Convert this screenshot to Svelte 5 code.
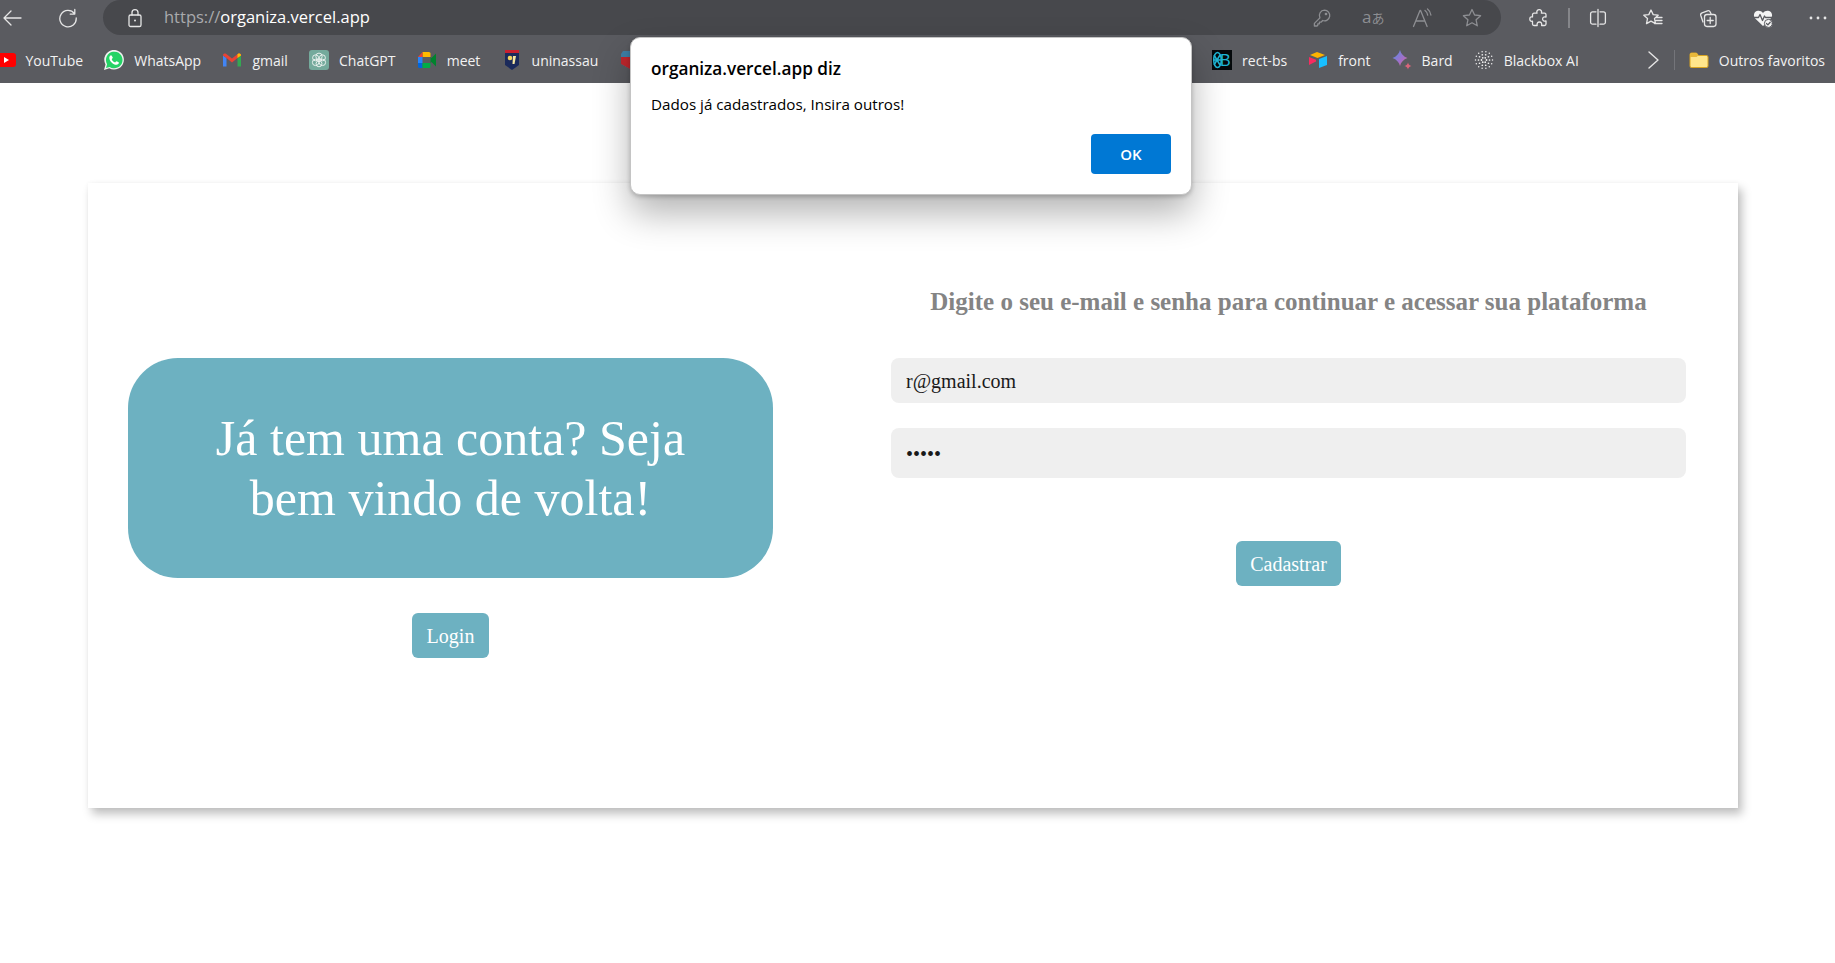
<script>
  // dots of the Blackbox favicon, rings around the centre
  const blackboxDots = [];
  for (const [radius, count, size] of [[2.5, 6, 0.9], [5.5, 10, 0.85], [8.5, 14, 0.75]]) {
    for (let i = 0; i < count; i++) {
      const angle = (i / count) * Math.PI * 2;
      blackboxDots.push({
        x: 10 + radius * Math.cos(angle),
        y: 10 + radius * Math.sin(angle),
        r: size
      });
    }
  }
</script>

<div class="page">
  <header class="browser">
    <div class="toolbar">
      <svg class="icon back" viewBox="0 0 20 20"><path d="M19 10H2M9 3 2 10l7 7" /></svg>
      <svg class="icon refresh" viewBox="0 0 20 20"><path d="M16.5 5.6A8.2 8.2 0 1 0 18.2 10M16.8 1.5v4.6h-4.6" /></svg>

      <div class="address">
        <svg class="icon" viewBox="0 0 20 20">
          <rect x="4" y="7" width="12" height="11.5" rx="1.6" />
          <path d="M7 7V4.6a3 3 0 0 1 6 0V7" />
          <circle class="solid" cx="10" cy="12.5" r="1" />
        </svg>
        <span class="url"><span class="scheme">https://</span>organiza.vercel.app</span>
        <div class="address-actions">
          <svg class="icon dim" viewBox="0 0 20 20">
            <path d="M12.5 2.2a5.3 5.3 0 1 1-1.8 10.3L9 14.2H7.4v1.6H5.8v1.4l-.8.8H2.4v-2.6l5.5-5.5a5.3 5.3 0 0 1 4.6-7.7z" />
            <circle cx="14" cy="6" r="0.7" />
          </svg>
          <span class="translate">a<span class="jp">あ</span></span>
          <svg class="icon dim" viewBox="0 0 20 20">
            <path d="M1.5 18.5 8 2.5h.6l6.5 16M3.8 13h9M13 2.5c1.6 1.2 2.5 2.8 2.7 4.6M15.5 1c2 1.6 3.2 3.6 3.4 6" />
          </svg>
          <svg class="icon dim" viewBox="0 0 20 20">
            <path d="M10 1.5l2.6 5.5 6 .7-4.500 4.100 1.200 6-5.300-3-5.300 3 1.200-6L1.400 7.700l6-.7z" />
          </svg>
        </div>
      </div>

      <div class="tools">
        <svg class="icon" viewBox="0 0 20 20">
          <path d="M8 5.200C7.200 2.800 8.800 1.600 10.200 1.600S13.200 2.800 12.400 5.200H15.500a1.500 1.500 0 0 1 1.500 1.500V9C14.800 8.400 13.600 9.600 13.600 11S14.800 13.600 17 13V16a1.500 1.500 0 0 1-1.500 1.500H12.600C13.200 15.300 12 14 10.400 14S7.600 15.300 8.200 17.500H5a1.500 1.500 0 0 1-1.500-1.500V13.200C1.400 13.800.8 12.200.8 11S1.400 8.400 3.500 9V6.700A1.500 1.500 0 0 1 5 5.200Z" />
        </svg>
        <span class="tool-sep"></span>
        <svg class="icon" viewBox="0 0 20 20">
          <path d="M8 3.800H4.600a2 2 0 0 0-2 2v8.400a2 2 0 0 0 2 2H8M12 3.800h3.400a2 2 0 0 1 2 2v8.400a2 2 0 0 1-2 2H12M10 1.500v17" />
        </svg>
        <svg class="icon" viewBox="0 0 20 20">
          <path d="M8 2l2.200 4.600 5 .6-3.700 3.400 1 5-4.500-2.500-4.500 2.500 1-5L.8 7.200l5-.6zM13.500 9.500H19M13 12.500h6M11.500 15.500H19" />
        </svg>
        <svg class="icon" viewBox="0 0 20 20">
          <path d="M5 14 2.800 7.500c-.4-1.300.2-2.300 1.300-2.700l5.400-2c1.200-.4 2.200 0 2.700 1.100l.8 1.800" />
          <rect x="6.500" y="6.500" width="11.500" height="12" rx="2.400" />
          <path d="M12.200 9.500v6M9.200 12.500h6" />
        </svg>
        <svg class="icon" viewBox="0 0 20 20">
          <path class="filled" d="M10 18 2.200 10.400C-.2 8 .8 3.300 4.800 2.700c2.100-.3 3.900.6 5.200 2.200 1.300-1.600 3.100-2.500 5.200-2.200 4 .6 5 5.300 2.600 7.700z" />
          <path class="pulse" d="M.8 9.500h4.700l1.500-3 2.500 6 2-4.500 1 1.500h6.500" />
          <circle class="badge" cx="15.400" cy="15.400" r="4" />
          <path class="tick" d="M13.500 15.500l1.400 1.400 2.300-2.600" />
        </svg>
        <svg class="icon" viewBox="0 0 20 20">
          <circle class="solid" cx="3" cy="10" r="1.400" />
          <circle class="solid" cx="10" cy="10" r="1.400" />
          <circle class="solid" cx="17" cy="10" r="1.400" />
        </svg>
      </div>
    </div>

    <nav class="bookmarks">
      <div class="bookmark-group left">
        <span class="bookmark">
          <svg class="favicon" viewBox="0 0 20 20">
            <rect y="3" width="20" height="14" rx="3" fill="#f00" />
            <path d="M8 7v6l5-3z" fill="#fff" />
          </svg>
          YouTube
        </span>
        <span class="bookmark">
          <svg class="favicon" viewBox="0 0 20 20">
            <path d="M0 20l1.500-5.500a9.800 9.800 0 1 1 3.800 3.800z" fill="#f2f2f2" />
            <path d="M2 18l1.100-3.800a8.300 8.300 0 1 1 2.600 2.700z" fill="#25d366" />
            <path d="M7 5.200c-.6 0-1.700 1-1.700 2.500 0 3.300 3.800 7.100 7.200 7.100 1.400 0 2.400-1.100 2.400-2 0-.4-2-1.500-2.500-1.500-.4 0-.9 1.100-1.300 1.100-1 0-3.300-2.200-3.300-3.200 0-.4 1-.9 1-1.400S7.500 5.200 7 5.200z" fill="#fff" />
          </svg>
          WhatsApp
        </span>
        <span class="bookmark">
          <svg class="favicon" viewBox="0 0 20 20">
            <path d="M1 5.500 1 16.500h3.500V8z" fill="#4285f4" />
            <path d="M19 5.500v11h-3.500V8z" fill="#34a853" />
            <path d="M1 5.500c0-2 2-2.500 3.300-1.500L10 8.500 15.700 4c1.300-1 3.300-.5 3.300 1.500L15.500 8 10 12.400 4.500 8z" fill="#ea4335" />
            <path d="M15.700 4c1.300-1 3.300-.5 3.300 1.500L15.500 8V4.200z" fill="#fbbc04" />
          </svg>
          gmail
        </span>
        <span class="bookmark">
          <svg class="favicon" viewBox="0 0 20 20">
            <rect width="20" height="20" rx="3" fill="#74aa9c" />
            <g fill="none" stroke="#e8f1ee" stroke-width="1">
              <circle cx="10" cy="6.300" r="3.200" />
              <circle cx="6.600" cy="12.400" r="3.200" />
              <circle cx="13.400" cy="12.400" r="3.200" />
              <circle cx="6.600" cy="7.800" r="3" />
              <circle cx="13.400" cy="7.800" r="3" />
              <circle cx="10" cy="13.800" r="3" />
            </g>
          </svg>
          ChatGPT
        </span>
        <span class="bookmark">
          <svg class="favicon" viewBox="0 0 20 20">
            <path d="M1 7h4.500v6H1z" fill="#2684fc" />
            <path d="M5.500 2H12a1.500 1.500 0 0 1 1.500 1.500V7h-8z" fill="#ffba00" />
            <path d="M5.500 2v5H1z" fill="#ea4335" />
            <path d="M1 13h4.500v5H2.500A1.500 1.500 0 0 1 1 16.500z" fill="#0066da" />
            <path d="M5.500 13h8v3.500A1.500 1.500 0 0 1 12 18H5.500z" fill="#00ac47" />
            <path d="M13.500 7v6l1-1 4.500 4.500v-13L14.500 8z" fill="#00832d" />
          </svg>
          meet
        </span>
        <span class="bookmark">
          <svg class="favicon" viewBox="0 0 20 20">
            <path d="M3 0h14v15l-7 5-7-5z" fill="#1b2a5b" />
            <path d="M3 0h14v3H3z" fill="#c8202f" />
            <circle cx="8" cy="8" r="2.300" fill="#f4d35e" />
            <path d="M11 6h3l-1.500 8h-2z" fill="#f7e7a1" />
          </svg>
          uninassau
        </span>
        <span class="bookmark">
          <svg class="favicon" viewBox="0 0 20 20">
            <path d="M3 1h14l2 3v10l-9 5-9-5V4z" fill="#3d7fa6" />
            <path d="M1 7h18v7l-9 5-9-5z" fill="#c0272d" />
          </svg>
        </span>
      </div>

      <div class="bookmark-group right">
        <span class="bookmark">
          <svg class="favicon" viewBox="0 0 20 20">
            <rect width="20" height="20" fill="#05090c" />
            <g fill="none" stroke="#1fb6d5" stroke-width="1.500">
              <ellipse cx="5.500" cy="10" rx="3.800" ry="7.500" />
              <path d="M1 10h8M2 5l6 10M2 15l6-10" />
            </g>
            <text x="8" y="16" class="rect-b">B</text>
          </svg>
          rect-bs
        </span>
        <span class="bookmark">
          <svg class="favicon" viewBox="0 0 20 20">
            <path d="M9 2 2 5l7.500 3L17 5z" fill="#fcb400" />
            <path d="M11 9v9l8-3V6z" fill="#18bfff" />
            <path d="M1 7v8l7-3.500V9.800z" fill="#f82b60" />
          </svg>
          front
        </span>
        <span class="bookmark">
          <svg class="favicon" viewBox="0 0 20 20">
            <defs>
              <linearGradient id="bard-grad" x1="0" y1="0" x2="1" y2="1">
                <stop offset="0" stop-color="#4f8fe8" />
                <stop offset="0.6" stop-color="#a36fc8" />
                <stop offset="1" stop-color="#e0707a" />
              </linearGradient>
            </defs>
            <path d="M8 0c1 3.800 3.400 6.500 7.500 8-4.100 1.500-6.500 4.200-7.500 8-1-3.800-3.400-6.500-7.500-8C4.600 6.500 7 3.800 8 0z" fill="url(#bard-grad)" />
            <path d="M16 12.500c.4 1.800 1.500 3 3.500 3.500-2 .5-3.100 1.700-3.500 3.500-.4-1.800-1.500-3-3.500-3.500 2-.5 3.100-1.700 3.500-3.500z" fill="#d9657a" />
          </svg>
          Bard
        </span>
        <span class="bookmark">
          <svg class="favicon" viewBox="0 0 20 20">
            {#each blackboxDots as dot}
              <circle cx={dot.x} cy={dot.y} r={dot.r} fill="#eee" />
            {/each}
          </svg>
          Blackbox AI
        </span>
        <svg class="icon chevron" viewBox="0 0 14 20"><path d="M3 2l9 8-9 8" /></svg>
        <span class="bar-sep"></span>
        <span class="bookmark">
          <svg class="favicon" viewBox="0 0 20 20">
            <path d="M1 4.500A1.500 1.500 0 0 1 2.500 3h5l2 2.500h8A1.500 1.500 0 0 1 19 7v9a1.500 1.500 0 0 1-1.500 1.500h-15A1.500 1.500 0 0 1 1 16z" fill="#ffe68c" stroke="#d9a520" />
            <path d="M1 4.500A1.500 1.500 0 0 1 2.500 3h5l2 2.500-2 1.500H1z" fill="#e9b93a" />
          </svg>
          Outros favoritos
        </span>
      </div>
    </nav>
  </header>

  <main class="card">
    <section class="welcome">
      <h1 class="banner">Já tem uma conta? Seja bem vindo de volta!</h1>
      <button class="action">Login</button>
    </section>

    <section class="signup">
      <h2>Digite o seu e-mail e senha para continuar e acessar sua plataforma</h2>
      <input class="field" type="email" value="r@gmail.com" />
      <input class="field password" type="password" value="abcde" />
      <button class="action">Cadastrar</button>
    </section>
  </main>

  <div class="dialog">
    <h3>organiza.vercel.app diz</h3>
    <p>Dados já cadastrados, Insira outros!</p>
    <div class="dialog-actions">
      <button class="ok">OK</button>
    </div>
  </div>
</div>

<style>
  :global(body) {
    background: #fff;
    overflow: hidden;
  }

  .page {
    position: relative;
    min-height: 100vh;
    overflow: hidden;
    font-family: "Liberation Serif", "Times New Roman", serif;
  }

  .browser {
    height: 83px;
    background: #5a5b60;
    font-family: "Open Sans", "Noto Sans", sans-serif;
    color: #f2f2f2;
  }

  .icon {
    width: 20px;
    height: 20px;
    flex: none;
    fill: none;
    stroke: #e6e6e6;
    stroke-width: 1.3;
    stroke-linecap: round;
    stroke-linejoin: round;
  }

  .icon .solid {
    fill: #e6e6e6;
    stroke: none;
  }

  .icon.dim {
    stroke: #8d8e92;
  }

  .toolbar {
    height: 35px;
    display: flex;
    align-items: center;
    padding-right: 7px;
  }

  .back {
    margin-left: 2px;
  }

  .refresh {
    margin-left: 36px;
  }

  .address {
    flex: 1;
    height: 35px;
    margin-left: 25px;
    padding: 0 19px 0 22px;
    display: flex;
    align-items: center;
    background: #47484c;
    border-radius: 18px;
  }

  .url {
    margin: -2px 0 0 19px;
    font-size: 16.5px;
    color: #fff;
  }

  .scheme {
    color: #a9aaad;
  }

  .address-actions {
    margin-left: auto;
    display: flex;
    align-items: center;
    gap: 30px;
  }

  .translate {
    width: 20px;
    font-size: 17px;
    line-height: 20px;
    color: #8d8e92;
    white-space: nowrap;
  }

  .jp {
    font-family: "Noto Sans CJK JP", sans-serif;
    font-size: 13px;
  }

  .tools {
    margin-left: 28px;
    display: flex;
    align-items: center;
    gap: 35px;
  }

  .tool-sep {
    width: 2px;
    height: 20px;
    margin: 0 -17px 0 -16px;
    background: #85868a;
  }

  .pulse {
    stroke: #5a5b60;
  }

  .filled {
    fill: #f4f4f4;
    stroke: none;
  }

  .badge {
    fill: #f4f4f4;
    stroke: #5a5b60;
    stroke-width: 1;
  }

  .tick {
    stroke: #5a5b60;
    stroke-width: 1.3;
  }

  .bookmarks {
    height: 48px;
    box-sizing: border-box;
    display: flex;
    align-items: center;
    justify-content: space-between;
    padding: 2px 10px 0 0;
    font-size: 14px;
  }

  .bookmark-group {
    display: flex;
    align-items: center;
    gap: 21px;
  }

  .bookmark-group.left {
    gap: 21.2px;
    margin-left: -4.5px;
  }

  .bookmark {
    display: flex;
    align-items: center;
    gap: 10px;
    white-space: nowrap;
  }

  .favicon {
    width: 20px;
    height: 20px;
    flex: none;
  }

  .rect-b {
    font-family: "Liberation Sans", sans-serif;
    font-size: 16px;
    fill: #1fb6d5;
  }

  .chevron {
    width: 14px;
    height: 20px;
    margin-left: 46px;
    stroke-width: 1.4;
  }

  .bar-sep {
    width: 1px;
    height: 20px;
    margin: 0 -7px;
    background: #74757a;
  }

  .card {
    margin: 100px 97px 0 88px;
    height: 625px;
    display: flex;
    gap: 118px;
    padding: 0 52px 0 40px;
    background: #fff;
    box-shadow: 4px 6px 9px rgba(0, 0, 0, 0.25), 0 0 4px rgba(0, 0, 0, 0.04);
  }

  .welcome {
    width: 645px;
    flex: none;
    padding-top: 175px;
    display: flex;
    flex-direction: column;
    align-items: center;
  }

  .banner {
    width: 100%;
    height: 220px;
    margin: 0;
    padding: 50px 60px;
    box-sizing: border-box;
    border-radius: 50px;
    background: #6db1c1;
    color: #fff;
    font-size: 50px;
    font-weight: 400;
    line-height: 60px;
    text-align: center;
  }

  .action {
    height: 45px;
    margin-top: 35px;
    padding: 2px 14.5px 0;
    border: none;
    border-radius: 6px;
    background: #6db1c1;
    color: #fff;
    font: 20px "Liberation Serif", serif;
  }

  .signup {
    flex: 1;
    padding-top: 105px;
    display: flex;
    flex-direction: column;
    align-items: center;
  }

  .signup h2 {
    margin: 0 0 42px;
    font-size: 25px;
    line-height: 28px;
    font-weight: 700;
    color: #848484;
    white-space: nowrap;
  }

  .field {
    width: 100%;
    height: 45px;
    box-sizing: border-box;
    padding: 2px 15px 0;
    border: none;
    border-radius: 8px;
    background: #efefef;
    color: #1a1a1a;
    font: 20px "Liberation Serif", serif;
  }

  .password {
    height: 50px;
    margin-top: 25px;
  }

  .signup .action {
    margin-top: 63px;
  }

  .dialog {
    position: absolute;
    left: 630px;
    top: 37px;
    width: 562px;
    height: 158px;
    box-sizing: border-box;
    padding: 20px;
    background: #fff;
    border: 1px solid #c4c4c4;
    border-radius: 10px;
    box-shadow: 0 18px 36px rgba(0, 0, 0, 0.3), 0 2px 4px rgba(0, 0, 0, 0.2);
    font-family: "Open Sans", "Noto Sans", sans-serif;
    color: #000;
  }

  .dialog h3 {
    margin: 0;
    font-size: 17.2px;
    line-height: 22px;
    font-weight: 600;
  }

  .dialog p {
    margin: 13px 0 0;
    font-size: 15.2px;
    line-height: 22px;
  }

  .dialog-actions {
    display: flex;
    justify-content: flex-end;
    margin-top: 19px;
  }

  .ok {
    width: 80px;
    height: 40px;
    border: none;
    border-radius: 4px;
    background: #0078d4;
    color: #fff;
    font: 600 15px "Open Sans", sans-serif;
  }
</style>
